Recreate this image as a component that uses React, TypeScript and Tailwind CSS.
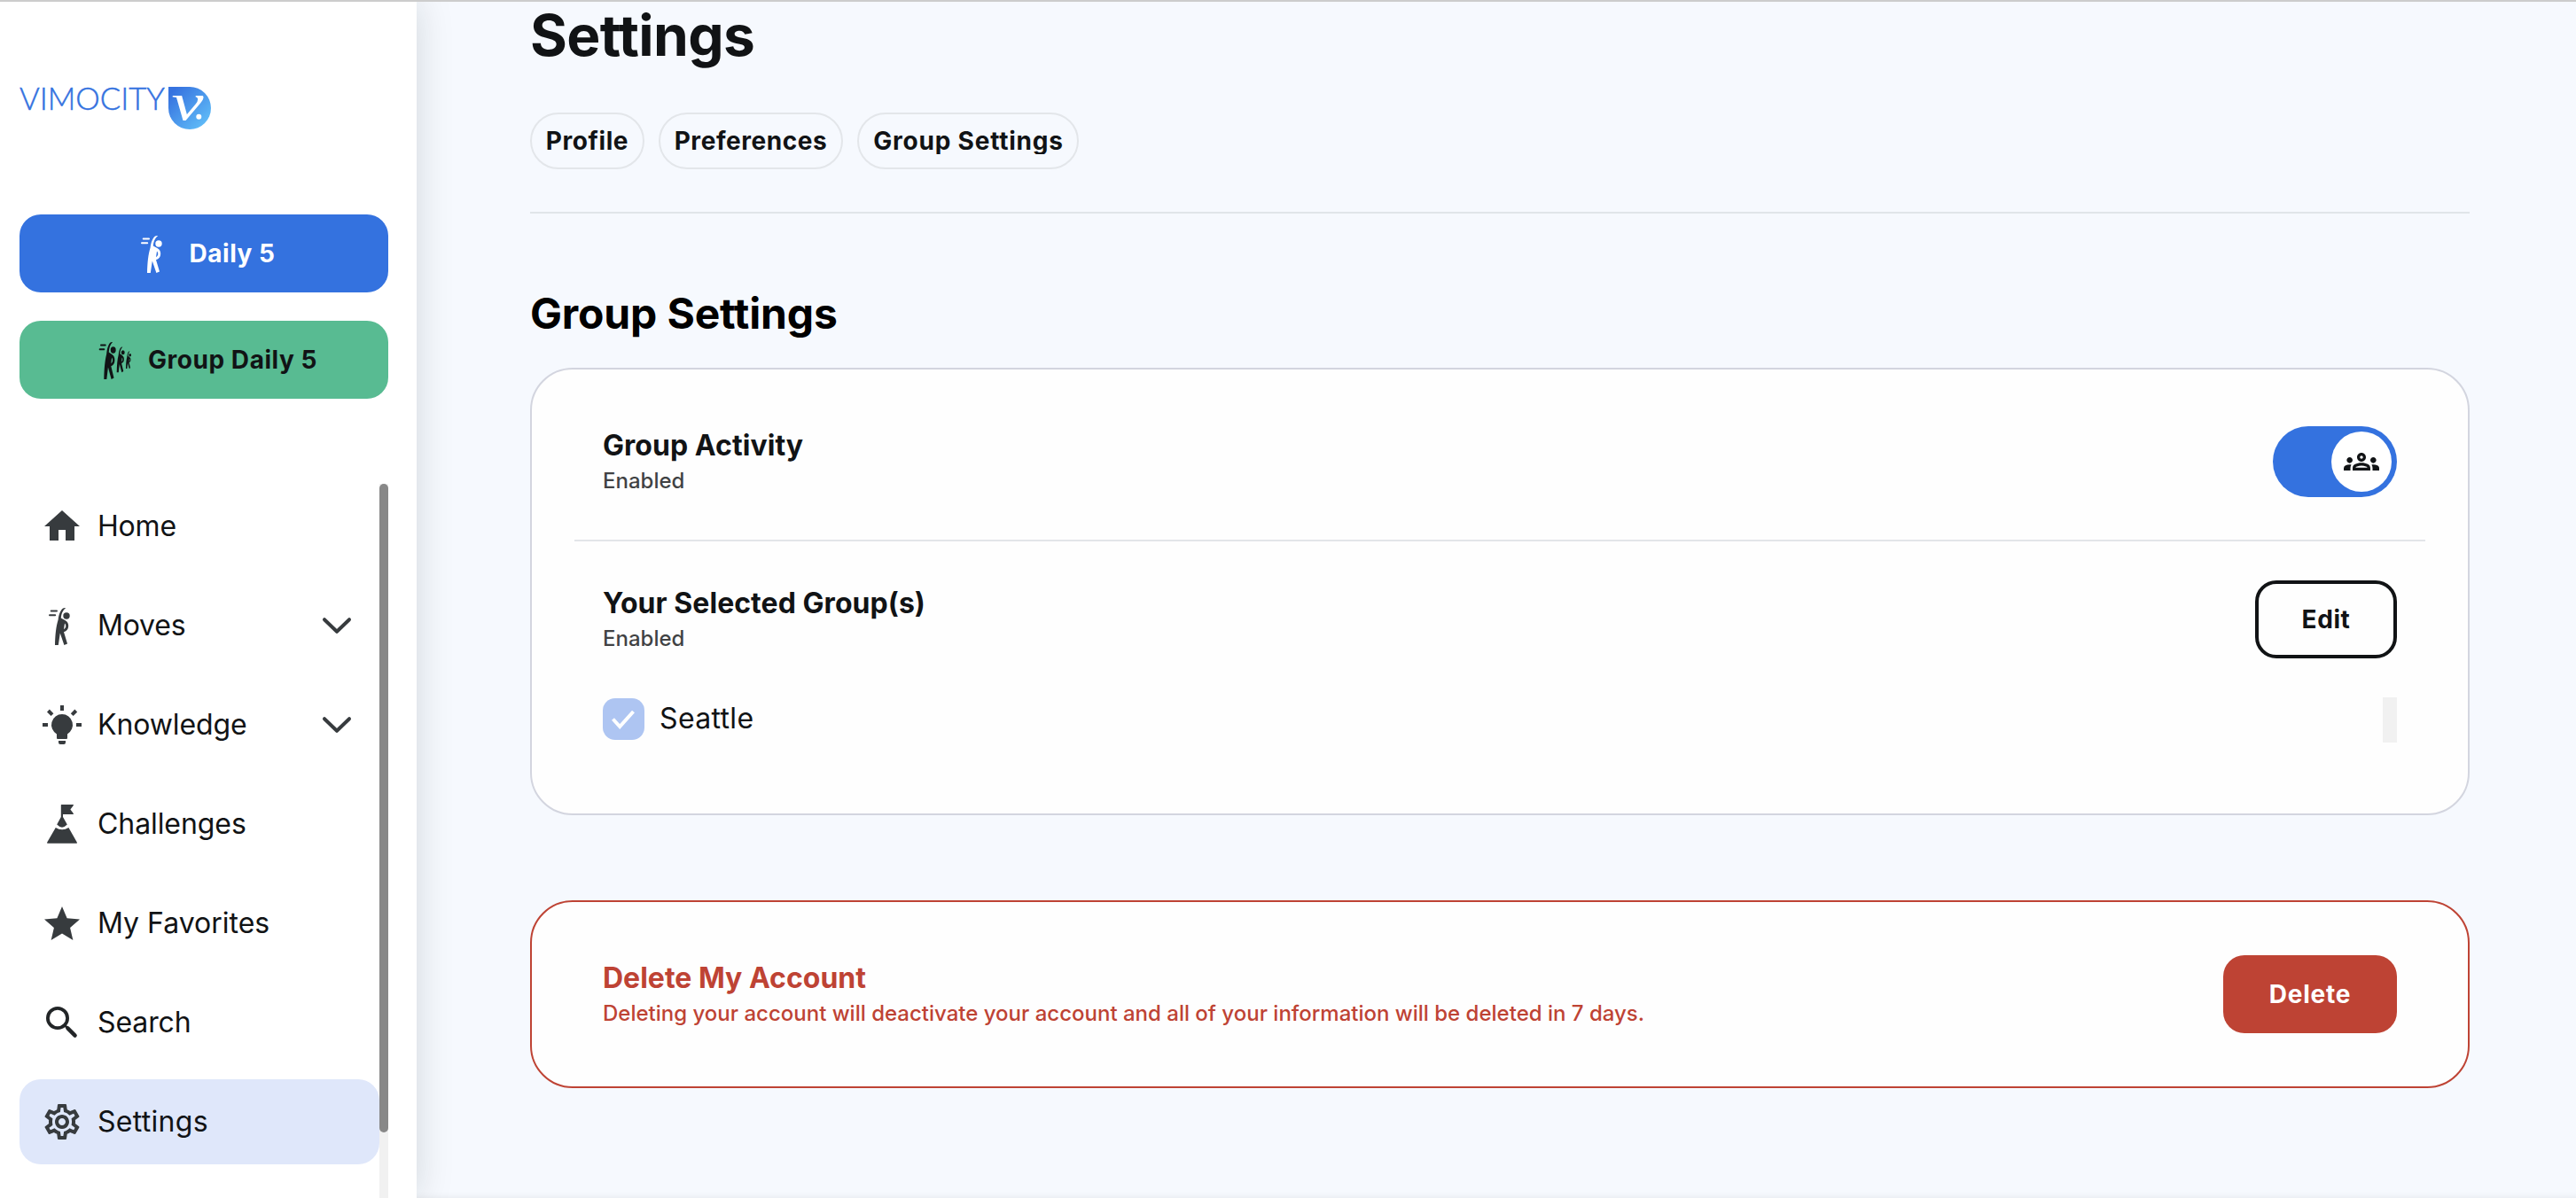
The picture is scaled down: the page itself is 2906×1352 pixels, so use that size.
import type { ReactNode } from "react";
import clsx from "clsx";
import {
  MdHome,
  MdOutlineGroups,
  MdOutlineSettings,
  MdStar,
} from "react-icons/md";

type NavItem = {
  label: string;
  icon: ReactNode;
  tracking: string;
  expandable?: boolean;
  active?: boolean;
};

const StretchFigure = () => (
  <>
    <path
      d="M27.2 1C24.6 0.6 22.6 1.8 21 5.4C19.6 8 19 11 18.6 14.4C16.2 22 15.3 31 15 43H18.8L20.8 29.6L25.4 43L29 41.4L25 28.2C28.4 27.2 30 25.4 30.2 21.6C30.2 18.6 29.2 16.8 26.4 15L21.8 12.4C22.2 7.8 23.4 4.4 27.2 1ZM26 18.6C28 20.8 27.6 24 25 25.2Z"
      fill="currentColor"
    />
    <circle cx="28" cy="10" r="3.7" fill="currentColor" />
  </>
);

const MotionLines = () => (
  <path
    d="M10.7 4.4H17M9 9.3H15.2"
    fill="none"
    stroke="currentColor"
    strokeWidth="2"
    strokeLinecap="round"
  />
);

const MovesIcon = () => (
  <svg width="48" height="48" viewBox="-1 -3 48 48">
    <MotionLines />
    <StretchFigure />
  </svg>
);

const GroupMovesIcon = () => (
  <svg width="50" height="48" viewBox="0 0 50 48">
    <g transform="translate(0.3 3) scale(0.8 1)">
      <MotionLines />
      <StretchFigure />
    </g>
    <g transform="translate(18.6 8.9) scale(0.54 0.68)">
      <StretchFigure />
    </g>
    <g transform="translate(31.6 14.1) scale(0.36 0.46)">
      <StretchFigure />
    </g>
  </svg>
);

const BulbIcon = () => (
  <svg width="48" height="48" fill="currentColor">
    <path d="M24 12a12 12 0 0 1 6 22.4V39a1 1 0 0 1-1 1H19a1 1 0 0 1-1-1v-4.6A12 12 0 0 1 24 12Z" />
    <path d="M20 42h8v2a2 2 0 0 1-2 2h-4a2 2 0 0 1-2-2Z" />
    <path d="M22 2h4v6h-4ZM2 22h6v4H2ZM40 22h6v4h-6Z" />
    <rect x="7.5" y="8.3" width="6.4" height="4" transform="rotate(45 10.7 10.3)" />
    <rect x="34.3" y="8.3" width="6.4" height="4" transform="rotate(-45 37.5 10.3)" />
  </svg>
);

const MountainIcon = () => (
  <svg width="48" height="48" fill="currentColor">
    <path d="M23.4 2H36.4Q37.4 2 36.8 3L33.4 7.5L36.8 12Q37.4 13 36.4 13H25V16L29.8 24.6Q24 30.8 18.2 24.6L22.8 16V2.6Q22.8 2 23.4 2Z" />
    <path d="M16.8 28Q24 32.6 31.4 28L40.9 44.8Q41.2 45.7 40.4 45.7H7.8Q6.8 45.7 7.1 44.8Z" />
  </svg>
);

const SearchIcon = () => (
  <svg
    width="48"
    height="48"
    fill="none"
    stroke="#222527"
    strokeLinecap="round"
  >
    <circle cx="19" cy="19" r="11.1" strokeWidth="3.8" />
    <path d="M27 27L30 30" strokeWidth="2.6" />
    <path d="M30.4 30.4L38.6 38.6" strokeWidth="4.4" />
  </svg>
);

const ChevronIcon = () => (
  <svg
    width="48"
    height="48"
    fill="none"
    stroke="currentColor"
    strokeWidth="4"
    strokeLinecap="round"
    strokeLinejoin="round"
  >
    <path d="M10 17.2L24 30.8L38 17.2" />
  </svg>
);

const Logo = () => (
  <svg width="216" height="48" className="shrink-0 overflow-visible">
    <defs>
      <linearGradient id="badge" x1="0" y1="0" x2="1" y2="1">
        <stop offset="0.1" stopColor="#3672df" />
        <stop offset="0.9" stopColor="#60bdf8" />
      </linearGradient>
    </defs>
    <text
      x="0"
      y="25.6"
      className="font-['Lato',sans-serif] text-[35.5px] font-light"
      fill="#3472df"
      stroke="#3472df"
      strokeWidth="0.5"
      textLength="164"
      lengthAdjust="spacingAndGlyphs"
    >
      VIMOCITY
    </text>
    <path
      d="M168 0H192A24 24 0 0 1 192 48A24 24 0 0 1 168 24Z"
      fill="url(#badge)"
    />
    <text
      x="171.5"
      y="37"
      className="font-['Liberation_Serif',serif] text-[60px] italic"
      fill="white"
      textLength="36"
      lengthAdjust="spacingAndGlyphs"
    >
      v
    </text>
    <circle cx="202.3" cy="33.8" r="3" fill="white" />
  </svg>
);

const navItems: NavItem[] = [
  { label: "Home", icon: <MdHome />, tracking: "tracking-[-0.2px]" },
  {
    label: "Moves",
    icon: <MovesIcon />,
    tracking: "tracking-[-0.2px]",
    expandable: true,
  },
  {
    label: "Knowledge",
    icon: <BulbIcon />,
    tracking: "tracking-[-0.1px]",
    expandable: true,
  },
  {
    label: "Challenges",
    icon: <MountainIcon />,
    tracking: "tracking-[-0.08px]",
  },
  {
    label: "My Favorites",
    icon: <MdStar className="translate-y-px" />,
    tracking: "tracking-normal",
  },
  { label: "Search", icon: <SearchIcon />, tracking: "tracking-[-0.1px]" },
  {
    label: "Settings",
    icon: <MdOutlineSettings />,
    tracking: "tracking-[0.3px]",
    active: true,
  },
];

const tabs = [
  { label: "Profile", className: "w-[129px] tracking-[0.57px]" },
  { label: "Preferences", className: "w-[208px] tracking-[0.57px]" },
  { label: "Group Settings", className: "w-[250px] pl-px tracking-[0.78px]" },
];

const Sidebar = () => (
  <aside className="z-10 flex w-[470px] shrink-0 flex-col bg-white pt-24 pr-8 pl-[22px] shadow-[0_0_40px_rgba(10,25,30,0.15)]">
    <Logo />
    <div className="mt-24 flex flex-col gap-8 text-[28px] font-bold">
      <button className="flex h-[88px] items-center justify-center gap-4 rounded-3xl bg-[#3472df] tracking-[0.5px] text-white">
        <MovesIcon />
        Daily 5
      </button>
      <button className="flex h-[88px] items-center justify-center gap-3 rounded-3xl bg-[#58bb92] pl-[3px] tracking-[0.54px]">
        <GroupMovesIcon />
        Group Daily 5
      </button>
    </div>
    <div className="mt-24 flex min-h-0 flex-1">
      <nav className="flex flex-1 flex-col gap-4 overflow-hidden">
        {navItems.map((item) => (
          <a
            key={item.label}
            className={clsx(
              "flex h-24 shrink-0 items-center gap-4 rounded-3xl px-6 text-[32px]",
              item.active && "bg-[#dfe7fa]"
            )}
          >
            <span className="text-[48px] text-[#373b3e]">{item.icon}</span>
            <span className={item.tracking}>{item.label}</span>
            {item.expandable && (
              <span className="ml-auto text-[#373b3e]">
                <ChevronIcon />
              </span>
            )}
          </a>
        ))}
      </nav>
      <div className="w-2.5 bg-[#f1f1f1]">
        <div className="h-[732px] rounded-full bg-[#888888]"></div>
      </div>
    </div>
  </aside>
);

const SettingLabel = ({ title, text }: { title: string; text: string }) => (
  <div className="flex flex-col gap-1">
    <h3 className="text-[32px] leading-10 font-bold tracking-[0.05px]">
      {title}
    </h3>
    <p className="text-[24px] leading-8 font-medium opacity-80">{text}</p>
  </div>
);

const App = () => {
  return (
    <div className="flex h-[1352px] w-[2906px] flex-col overflow-hidden border-t-2 border-[#cccccc] bg-[#f6f9fe] font-['Inter',sans-serif] text-[#111315]">
      <div className="flex min-h-0 flex-1">
        <Sidebar />
        <main className="flex-1 pt-1.5 pr-[120px] pl-32 shadow-[inset_0_-8px_8px_-8px_rgba(10,25,30,0.08)]">
          <h1 className="text-[64px] leading-[64px] font-bold tracking-[-0.6px]">
            Settings
          </h1>
          <div className="mt-[55px] flex gap-4">
            {tabs.map((tab) => (
              <button
                key={tab.label}
                className={clsx(
                  "flex h-16 items-center justify-center rounded-full border-2 border-[#e3e6ea] text-[28px] font-bold",
                  tab.className
                )}
              >
                <span className="h-[30px] overflow-hidden leading-[30px] whitespace-nowrap">
                  {tab.label}
                </span>
              </button>
            ))}
          </div>
          <hr className="mt-12 border-t-2 border-[#e0e5e9]" />

          <h2 className="mt-[85px] text-[48px] leading-[56px] font-bold tracking-[-0.16px] text-black">
            Group Settings
          </h2>
          <section className="mt-[33px] rounded-[48px] border-2 border-[#d3d5df] bg-[#fefefe] px-20 pt-16 pb-20">
            <div className="flex h-20 items-center justify-between">
              <SettingLabel title="Group Activity" text="Enabled" />
              <button
                role="switch"
                aria-checked="true"
                aria-label="Group Activity"
                className="flex h-20 w-[140px] items-center justify-end rounded-full bg-[#3472df] pr-1.5"
              >
                <span className="flex size-[68px] items-center justify-center rounded-full bg-white text-[40px]">
                  <MdOutlineGroups />
                </span>
              </button>
            </div>
            <hr className="-mx-8 mt-12 border-t-2 border-[#e3e5e9]" />
            <div className="mt-11 flex h-[88px] items-center justify-between">
              <SettingLabel title="Your Selected Group(s)" text="Enabled" />
              <button className="h-[88px] w-40 rounded-3xl border-4 border-[#111315] text-[28px] font-bold tracking-[0.58px]">
                Edit
              </button>
            </div>
            <div className="mt-11 flex h-[51px] items-start justify-between">
              <label className="flex items-center gap-[17px]">
                <svg
                  width="47"
                  height="47"
                  className="rounded-[14px] bg-[#aec5f2]"
                  fill="none"
                  stroke="white"
                  strokeWidth="4"
                >
                  <path d="M11.5 23.5L19.2 32L34.5 15" />
                </svg>
                <span className="text-[32px] tracking-[0.35px]">Seattle</span>
              </label>
              <div className="h-full w-4 bg-[#f1f1f1]"></div>
            </div>
          </section>

          <section className="mt-24 flex h-[212px] items-center justify-between rounded-[48px] border-2 border-[#be4334] bg-[#fefefe] px-20">
            <div className="flex flex-col gap-1 text-[#be4334]">
              <h3 className="text-[32px] leading-10 font-bold">
                Delete My Account
              </h3>
              <p className="text-[24px] leading-8 font-medium">
                Deleting your account will deactivate your account and all of
                your information will be deleted in 7 days.
              </p>
            </div>
            <button className="h-[88px] w-[196px] rounded-3xl bg-[#be4334] text-[28px] font-bold tracking-[0.77px] text-white">
              Delete
            </button>
          </section>
        </main>
      </div>
    </div>
  );
};

export default App;
